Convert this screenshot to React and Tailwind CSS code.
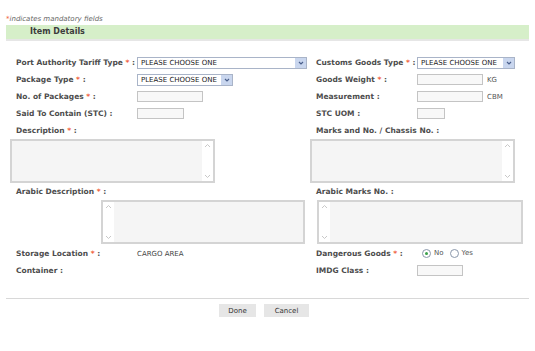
import React from 'react';

const Star = () => <span className="text-[#f0603c]"> *</span>;

const Label = ({ text, req }) => (
  <span className="text-[7.5px] font-bold leading-[10px] text-[#4d4d4d] whitespace-nowrap">
    {text}
    {req && <Star />} :
  </span>
);

const Select = ({ w }) => (
  <div className={`flex h-[12px] items-stretch border border-[#a9b4c8] bg-white ${w}`}>
    <span className="flex-1 pl-[3px] text-[7px] leading-[10px] text-[#222] whitespace-nowrap overflow-hidden">
      PLEASE CHOOSE ONE
    </span>
    <span className="flex w-[11px] items-center justify-center bg-[#c9d6ee] text-[#4a5f8c]">
      <svg width="6" height="4" viewBox="0 0 6 4">
        <path d="M1 1 L3 3 L5 1" fill="none" stroke="currentColor" strokeWidth="1.2" />
      </svg>
    </span>
  </div>
);

const Input = ({ w }) => (
  <div className={`h-[11px] border border-[#c4c4c4] bg-[#f8f8f8] ${w}`} />
);

const Textarea = ({ w, bar = 'right' }) => (
  <div className={`flex h-[44px] border-2 border-[#d4d4d4] bg-[#f5f5f5] ${w} ${bar === 'left' ? 'flex-row-reverse' : ''}`}>
    <div className="flex-1" />
    <div className="flex w-[11px] flex-col justify-between bg-white py-[1px] text-[#c8c8c8]">
      <svg width="11" height="8" viewBox="0 0 11 8">
        <path d="M3 5 L5.5 2.5 L8 5" fill="none" stroke="currentColor" strokeWidth="1" />
      </svg>
      <svg width="11" height="8" viewBox="0 0 11 8">
        <path d="M3 3 L5.5 5.5 L8 3" fill="none" stroke="currentColor" strokeWidth="1" />
      </svg>
    </div>
  </div>
);

const Row = ({ children }) => (
  <div className="grid h-[17px] grid-cols-[121px_179px_101px_1fr] items-center pl-[16px]">
    {children}
  </div>
);

const Radio = ({ checked, label }) => (
  <span className="flex items-center gap-[3px] text-[7px] leading-[9px] text-[#555]">
    <span className="flex h-[9px] w-[9px] items-center justify-center rounded-full border border-[#8a97ab] bg-white">
      {checked && <span className="h-[3px] w-[3px] rounded-full bg-[#3aa04a]" />}
    </span>
    {label}
  </span>
);

export default function App() {
  return (
    <div className="h-[351px] w-[535px] bg-white font-['DejaVu_Sans',sans-serif] text-[8px] leading-[10px]">
      <div className="px-[6px] pt-[15px]">
        <div className="text-[7px] italic leading-[8px] text-[#666]">
          <span className="text-[#f0603c]">*</span>indicates mandatory fields
        </div>
        <div className="mt-[2px] flex h-[16px] items-center border-b-2 border-[#e6e6e6] bg-[#d6efc9] pl-[24px]">
          <span className="text-[8px] font-bold text-[#3c3c3c]">Item Details</span>
        </div>
      </div>

      <div className="mt-[13px]">
        <Row>
          <Label text="Port Authority Tariff Type" req />
          <Select w="w-[170px]" />
          <Label text="Customs Goods Type" req />
          <Select w="w-[98px]" />
        </Row>
        <Row>
          <Label text="Package Type" req />
          <Select w="w-[96px]" />
          <Label text="Goods Weight" req />
          <div className="flex items-center gap-[4px]">
            <Input w="w-[66px]" />
            <span className="text-[7px] text-[#555]">KG</span>
          </div>
        </Row>
        <Row>
          <Label text="No. of Packages" req />
          <Input w="w-[66px]" />
          <Label text="Measurement" />
          <div className="flex items-center gap-[4px]">
            <Input w="w-[66px]" />
            <span className="text-[7px] text-[#555]">CBM</span>
          </div>
        </Row>
        <Row>
          <Label text="Said To Contain (STC)" />
          <Input w="w-[47px]" />
          <Label text="STC UOM" />
          <Input w="w-[28px]" />
        </Row>
        <Row>
          <div className="col-span-2 flex">
            <Label text="Description" req />
          </div>
          <div className="col-span-2 flex">
            <Label text="Marks and No. / Chassis No." />
          </div>
        </Row>
      </div>

      <div className="grid grid-cols-[300px_1fr] pl-[10px]">
        <Textarea w="w-[205px]" />
        <Textarea w="w-[205px]" />
      </div>

      <Row>
        <div className="col-span-2 flex">
          <Label text="Arabic Description" req />
        </div>
        <div className="col-span-2 flex">
          <Label text="Arabic Marks No." />
        </div>
      </Row>

      <div className="grid grid-cols-[216px_1fr] pl-[101px]">
        <Textarea w="w-[204px]" bar="left" />
        <Textarea w="w-[206px]" bar="left" />
      </div>

      <div className="mt-[1px]">
        <Row>
          <Label text="Storage Location" req />
          <span className="text-[7px] text-[#444]">CARGO AREA</span>
          <Label text="Dangerous Goods" req />
          <div className="flex items-center gap-[6px] pl-[5px]">
            <Radio checked label="No" />
            <Radio label="Yes" />
          </div>
        </Row>
        <Row>
          <Label text="Container" />
          <span />
          <Label text="IMDG Class" />
          <Input w="w-[46px]" />
        </Row>
      </div>

      <div className="mx-[6px] mt-[19px] border-t border-[#d8d8d8]" />

      <div className="mt-[5px] flex justify-center gap-[8px] pr-[7px]">
        <button className="h-[13px] w-[37px] bg-[#e6e6e6] text-[7px] text-[#333]">Done</button>
        <button className="h-[13px] w-[45px] bg-[#e6e6e6] text-[7px] text-[#333]">Cancel</button>
      </div>
    </div>
  );
}
